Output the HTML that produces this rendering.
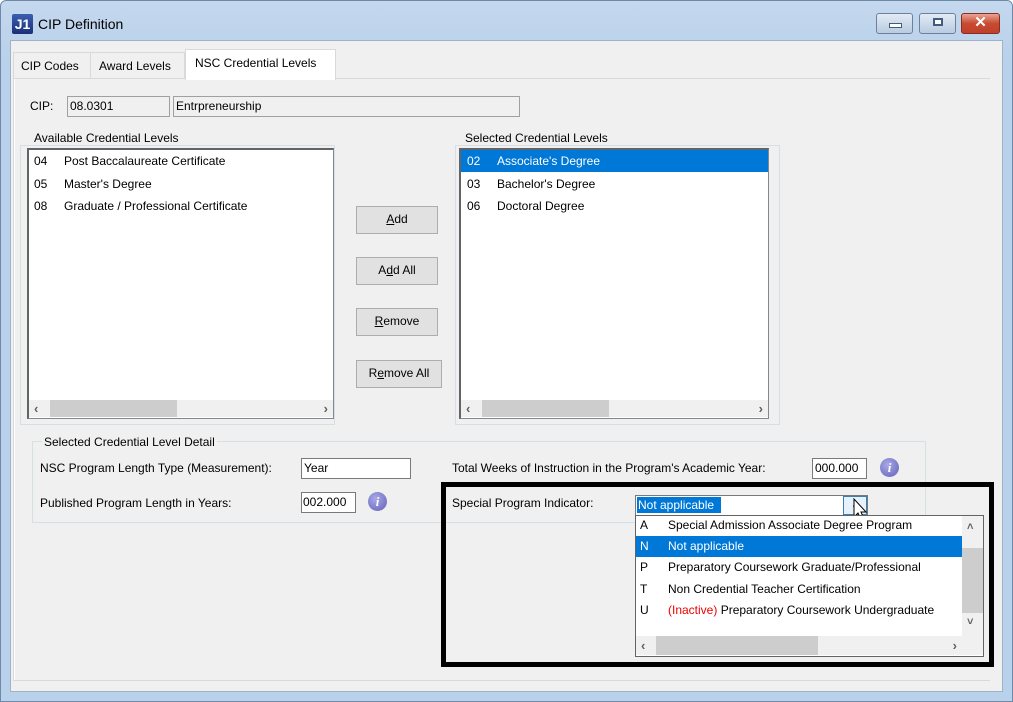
<!DOCTYPE html>
<html><head><style>
body{margin:0;width:1013px;height:702px;overflow:hidden;background:#fff;font-family:"Liberation Sans",sans-serif;font-size:12px;color:#000;position:relative}
.a{position:absolute}
.t{position:absolute;white-space:nowrap;line-height:14px}
.box{position:absolute;background:#fff;border:1px solid #7a7a7a;box-sizing:border-box}
.ro{position:absolute;background:#f0f0f0;border:1px solid #a0a0a0;box-sizing:border-box}
.btn{position:absolute;background:#e1e1e1;border:1px solid #adadad;box-sizing:border-box;text-align:center;line-height:25px}
.gb{position:absolute;border:1px solid #d5dfe5;box-sizing:border-box}
.gbt{position:absolute;background:#f0f0f0;padding:0 2px;white-space:nowrap;line-height:14px}
.info{position:absolute;width:19px;height:19px;border-radius:50%;background:radial-gradient(circle at 40% 35%,#a9a9e8,#6060b8);color:#fff;font:bold italic 13px "Liberation Serif",serif;text-align:center;line-height:19px}
.hs{position:absolute;height:17px;background:#f0f0f0}
.hs .th{position:absolute;top:0;height:17px;background:#cdcdcd}
.arr{position:absolute;color:#606060;font-size:13px;font-weight:bold;line-height:17px}
</style></head><body>
<div class="a" style="left:0;top:0;width:1013px;height:702px;background:linear-gradient(#c4d8ee,#b9d1ea 60px,#b9d1ea);border:1px solid #6f8aa8;box-sizing:border-box;border-radius:6px 6px 0 0"></div>
<div class="a" style="left:12px;top:14px;width:21px;height:20px;background:linear-gradient(#3a5fb0,#1c2f78);color:#fff;font:bold 14px 'Liberation Sans',sans-serif;line-height:20px;text-align:center;border-radius:2px">J1</div>
<div class="t" style="left:38px;top:17px;font-size:14px">CIP Definition</div>
<div class="a" style="left:876px;top:13px;width:37px;height:21px;border:1px solid #6d819c;border-radius:3px;background:linear-gradient(#e2ebf5,#b9cbe0);box-sizing:border-box"><div class="a" style="left:12px;top:9px;width:11px;height:3px;background:#fff;border:1px solid #435c7e"></div></div>
<div class="a" style="left:919px;top:13px;width:37px;height:21px;border:1px solid #6d819c;border-radius:3px;background:linear-gradient(#e2ebf5,#b9cbe0);box-sizing:border-box"><div class="a" style="left:13px;top:4px;width:6px;height:4px;background:#fff;border:2px solid #435c7e"></div></div>
<div class="a" style="left:961px;top:13px;width:39px;height:21px;border:1px solid #8a2c1f;border-radius:3px;background:linear-gradient(#e8a595,#c84a31 50%,#c0402a);box-sizing:border-box;color:#fff;font:bold 15px 'Liberation Sans',sans-serif;text-align:center;line-height:18px">✕</div>
<div class="a" style="left:10px;top:40px;width:993px;height:652px;background:#f0f0f0;border:1px solid #9fb3c8;box-sizing:border-box"></div>
<div class="a" style="left:13px;top:78px;width:977px;height:603px;border:1px solid #d9d9d9;background:#fff;box-sizing:border-box"></div>
<div class="a" style="left:14px;top:79px;width:975px;height:601px;background:#f0f0f0;border-left:1px solid #fff"></div>
<div class="a" style="left:13px;top:52px;width:78px;height:26px;border:1px solid #d9d9d9;border-bottom:none;box-sizing:border-box;background:#f0f0f0"></div>
<div class="t" style="left:21px;top:59px">CIP Codes</div>
<div class="a" style="left:91px;top:52px;width:94px;height:26px;border:1px solid #d9d9d9;border-left:none;border-bottom:none;box-sizing:border-box;background:#f0f0f0"></div>
<div class="t" style="left:99px;top:59px">Award Levels</div>
<div class="a" style="left:185px;top:49px;width:151px;height:31px;border:1px solid #d9d9d9;border-bottom:none;box-sizing:border-box;background:#fff"></div>
<div class="t" style="left:195px;top:56px">NSC Credential Levels</div>
<div class="t" style="left:30px;top:99px">CIP:</div>
<div class="ro" style="left:67px;top:96px;width:103px;height:21px"></div><div class="t" style="left:70px;top:99px">08.0301</div>
<div class="ro" style="left:173px;top:96px;width:347px;height:21px"></div><div class="t" style="left:176px;top:99px">Entrpreneurship</div>
<div class="gb" style="left:20px;top:145px;width:315px;height:280px"></div><div class="gbt" style="left:32px;top:131px">Available Credential Levels</div>
<div class="box" style="left:27px;top:148px;width:307px;height:271px;border-color:#828790;border-left:2px solid #646464;border-top:2px solid #646464"></div>
<div class="t" style="left:34px;top:154px">04</div><div class="t" style="left:64px;top:154px">Post Baccalaureate Certificate</div>
<div class="t" style="left:34px;top:177px">05</div><div class="t" style="left:64px;top:177px">Master's Degree</div>
<div class="t" style="left:34px;top:199px">08</div><div class="t" style="left:64px;top:199px">Graduate / Professional Certificate</div>
<div class="hs" style="left:29px;top:400px;width:304px"><div class="th" style="left:21px;width:127px"></div><div class="arr" style="left:5px">‹</div><div class="arr" style="right:5px">›</div></div>
<div class="gb" style="left:455px;top:145px;width:325px;height:280px"></div><div class="gbt" style="left:463px;top:131px">Selected Credential Levels</div>
<div class="box" style="left:459px;top:148px;width:310px;height:271px;border-color:#828790;border-left:2px solid #646464;border-top:2px solid #646464"></div>
<div class="a" style="left:461px;top:150px;width:307px;height:22px;background:#0078d7"></div>
<div class="t" style="left:467px;top:154px;color:#fff">02</div><div class="t" style="left:497px;top:154px;color:#fff">Associate's Degree</div>
<div class="t" style="left:467px;top:177px">03</div><div class="t" style="left:497px;top:177px">Bachelor's Degree</div>
<div class="t" style="left:467px;top:199px">06</div><div class="t" style="left:497px;top:199px">Doctoral Degree</div>
<div class="hs" style="left:461px;top:400px;width:307px"><div class="th" style="left:21px;width:127px"></div><div class="arr" style="left:5px">‹</div><div class="arr" style="right:5px">›</div></div>
<div class="btn" style="left:356px;top:206px;width:82px;height:28px"><u>A</u>dd</div>
<div class="btn" style="left:356px;top:257px;width:82px;height:28px">A<u>d</u>d All</div>
<div class="btn" style="left:356px;top:308px;width:82px;height:28px"><u>R</u>emove</div>
<div class="btn" style="left:356px;top:360px;width:86px;height:28px">R<u>e</u>move All</div>
<div class="gb" style="left:32px;top:441px;width:894px;height:82px"></div><div class="gbt" style="left:42px;top:435px">Selected Credential Level Detail</div>
<div class="t" style="left:40px;top:461px">NSC Program Length Type (Measurement):</div>
<div class="box" style="left:301px;top:458px;width:110px;height:21px"></div><div class="t" style="left:304px;top:461px">Year</div>
<div class="t" style="left:40px;top:496px">Published Program Length in Years:</div>
<div class="box" style="left:301px;top:492px;width:55px;height:21px"></div><div class="t" style="left:303px;top:495px">002.000</div>
<div class="info" style="left:368px;top:492px">i</div>
<div class="t" style="left:452px;top:461px">Total Weeks of Instruction in the Program's Academic Year:</div>
<div class="box" style="left:812px;top:458px;width:55px;height:21px"></div><div class="t" style="left:815px;top:461px">000.000</div>
<div class="info" style="left:880px;top:458px">i</div>
<div class="a" style="left:441px;top:482px;width:553px;height:185px;border:5px solid #000;box-sizing:border-box"></div>
<div class="t" style="left:452px;top:496px">Special Program Indicator:</div>
<div class="box" style="left:635px;top:495px;width:233px;height:21px;border-color:#7a7a7a"></div>
<div class="a" style="left:637px;top:497px;width:84px;height:16px;background:#0078d7"></div>
<div class="t" style="left:638px;top:498px;color:#fff">Not applicable</div>
<div class="a" style="left:843px;top:496px;width:24px;height:19px;background:#e5f1fb;border:1px solid #3c7fb1;box-sizing:border-box;text-align:center;font-size:10px;line-height:17px">⌄</div>
<svg class="a" style="left:853px;top:498px" width="20" height="28" viewBox="0 0 20 28"><path d="M1 1 L1 19 L5 15 L8 22 L11 21 L8 14 L13 14 Z" fill="#fff" stroke="#000" stroke-width="1"/></svg>
<div class="box" style="left:635px;top:515px;width:349px;height:142px;border-color:#646464"></div>
<div class="t" style="left:640px;top:518px">A</div><div class="t" style="left:668px;top:518px">Special Admission Associate Degree Program</div>
<div class="a" style="left:636px;top:536px;width:326px;height:21px;background:#0078d7"></div>
<div class="t" style="left:640px;top:539px;color:#fff">N</div><div class="t" style="left:668px;top:539px;color:#fff">Not applicable</div>
<div class="t" style="left:640px;top:560px">P</div><div class="t" style="left:668px;top:560px">Preparatory Coursework Graduate/Professional</div>
<div class="t" style="left:640px;top:582px">T</div><div class="t" style="left:668px;top:582px">Non Credential Teacher Certification</div>
<div class="t" style="left:640px;top:603px">U</div><div class="t" style="left:668px;top:603px"><span style="color:#e00">(Inactive)</span> Preparatory Coursework Undergraduate</div>
<div class="a" style="left:962px;top:516px;width:21px;height:120px;background:#f0f0f0"><div class="a" style="left:0;top:32px;width:21px;height:65px;background:#cdcdcd"></div><div class="arr" style="left:5px;top:3px;font-size:11px">˄</div><div class="arr" style="left:5px;top:98px;font-size:11px">˅</div></div>
<div class="hs" style="left:636px;top:636px;width:326px;height:19px"><div class="th" style="left:20px;width:162px;height:19px"></div><div class="arr" style="left:5px;top:1px">‹</div><div class="arr" style="right:5px;top:1px">›</div></div>
<div class="a" style="left:962px;top:636px;width:21px;height:19px;background:#f0f0f0"></div>
</body></html>
